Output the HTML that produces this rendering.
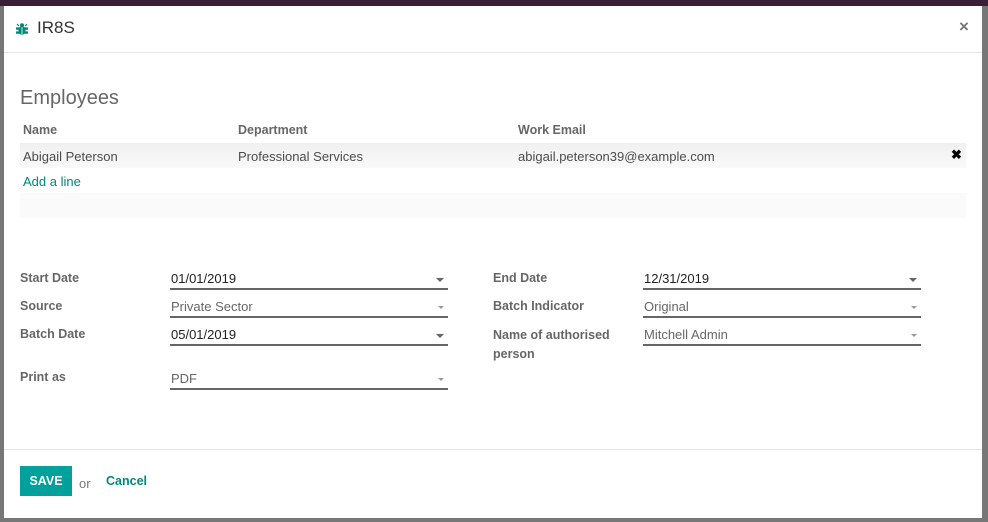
<!DOCTYPE html><html><head><style>
body{margin:0;width:988px;height:522px;background:#777;position:relative;overflow:hidden;font-family:"Liberation Sans",sans-serif;font-size:13px;color:#4c4c4c}
.top{position:absolute;left:0;top:0;width:988px;height:6px;background:#3b1f34}
.m{position:absolute;left:4px;top:6px;width:978px;height:512px;background:#fff}
.a{position:absolute;white-space:nowrap}
.lb{font-weight:bold;color:#666;font-size:12.5px}
.f{position:absolute;border-bottom:2px solid #666;height:20px}
.f span{position:absolute;left:1px;top:3px}
.f i{position:absolute;right:4px;top:10px;border:4px solid transparent;border-top:4px solid #666;border-bottom:0}
.f.l span{color:#666}
.f.l i{border-top-color:#999;border-width:3px;border-bottom:0}
</style></head><body>
<div class="top"></div>
<div class="m">
<svg class="a" style="left:12px;top:16px" width="12" height="14" viewBox="0 0 12 14"><g fill="#00897b"><ellipse cx="6" cy="8.5" rx="3.5" ry="4.5"/><circle cx="6" cy="3.2" r="2"/><path d="M0 6h12v1.2H0zM0 10h12v1.2H0zM1 2l2 2M11 2l-2 2" stroke="#00897b" stroke-width="1.2"/></g><path d="M6 5v8" stroke="#fff" stroke-width=".8"/></svg>
<div class="a" style="left:33px;top:12px;font-size:17px;color:#333">IR8S</div>
<div class="a" style="left:955px;top:11px;font-size:17px;font-weight:bold;color:#777">×</div>
<div class="a" style="left:0;top:46px;width:978px;height:1px;background:#e5e5e5"></div>
<div class="a" style="left:16px;top:81px;font-size:20px;color:#666">Employees</div>
<div class="a lb" style="left:19px;top:117px">Name</div>
<div class="a lb" style="left:234px;top:117px">Department</div>
<div class="a lb" style="left:514px;top:117px">Work Email</div>
<div class="a" style="left:16px;top:137px;width:946px;height:25px;background:linear-gradient(#f0f0f0,#f9f9f9)"></div>
<div class="a" style="left:19px;top:143px">Abigail Peterson</div>
<div class="a" style="left:234px;top:143px">Professional Services</div>
<div class="a" style="left:514px;top:143px">abigail.peterson39@example.com</div>
<div class="a" style="left:947px;top:141px;font-size:13px;font-weight:bold;color:#000">✖</div>
<div class="a" style="left:19px;top:168px;color:#00897b">Add a line</div>
<div class="a" style="left:16px;top:187px;width:946px;height:25px;background:#fafafa"></div>
<div class="a lb" style="left:16px;top:265px">Start Date</div>
<div class="a lb" style="left:16px;top:293px">Source</div>
<div class="a lb" style="left:16px;top:321px">Batch Date</div>
<div class="a lb" style="left:16px;top:364px">Print as</div>
<div class="f" style="left:166px;top:262px;width:278px"><span style="color:#222">01/01/2019</span><i></i></div>
<div class="f l" style="left:166px;top:290px;width:278px"><span>Private Sector</span><i></i></div>
<div class="f" style="left:166px;top:318px;width:278px"><span style="color:#222">05/01/2019</span><i></i></div>
<div class="f l" style="left:166px;top:362px;width:278px"><span>PDF</span><i></i></div>
<div class="a lb" style="left:489px;top:265px">End Date</div>
<div class="a lb" style="left:489px;top:293px">Batch Indicator</div>
<div class="a lb" style="left:489px;top:320px;line-height:19px">Name of authorised<br>person</div>
<div class="f" style="left:639px;top:262px;width:278px"><span style="color:#222">12/31/2019</span><i></i></div>
<div class="f l" style="left:639px;top:290px;width:278px"><span>Original</span><i></i></div>
<div class="f l" style="left:639px;top:318px;width:278px"><span>Mitchell Admin</span><i></i></div>
<div class="a" style="left:0;top:443px;width:978px;height:1px;background:#e5e5e5"></div>
<div class="a" style="left:16px;top:460px;width:52px;height:30px;background:#00a09d;color:#fff;font-weight:bold;text-align:center;line-height:30px;font-size:12.5px">SAVE</div>
<div class="a" style="left:75px;top:470px;color:#777">or</div>
<div class="a" style="left:102px;top:468px;color:#00897b;font-weight:bold;font-size:12.5px">Cancel</div>
</div>
</body></html>
